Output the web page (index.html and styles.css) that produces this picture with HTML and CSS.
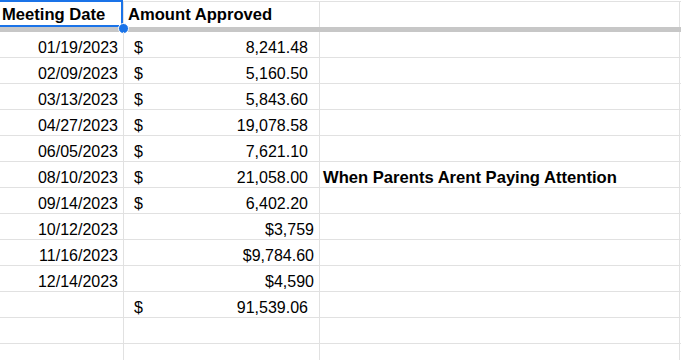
FILE: index.html
```html
<!DOCTYPE html>
<html>
<head>
<meta charset="utf-8">
<link rel="stylesheet" href="styles.css">
</head>
<body>
<div class="sheet">
  <div class="row head">
    <div class="cell a b">Meeting Date</div>
    <div class="cell b">Amount Approved</div>
    <div class="cell"></div>
    <div class="cell d"></div>
    <div class="sel"></div>
    <div class="dot"></div>
  </div>
  <div class="freeze"></div>

  <div class="row"><div class="cell r">01/19/2023</div><div class="cell acc"><span>$</span><span>8,241.48</span></div><div class="cell"></div><div class="cell d"></div></div>
  <div class="row"><div class="cell r">02/09/2023</div><div class="cell acc"><span>$</span><span>5,160.50</span></div><div class="cell"></div><div class="cell d"></div></div>
  <div class="row"><div class="cell r">03/13/2023</div><div class="cell acc"><span>$</span><span>5,843.60</span></div><div class="cell"></div><div class="cell d"></div></div>
  <div class="row"><div class="cell r">04/27/2023</div><div class="cell acc"><span>$</span><span>19,078.58</span></div><div class="cell"></div><div class="cell d"></div></div>
  <div class="row"><div class="cell r">06/05/2023</div><div class="cell acc"><span>$</span><span>7,621.10</span></div><div class="cell"></div><div class="cell d"></div></div>
  <div class="row"><div class="cell r">08/10/2023</div><div class="cell acc"><span>$</span><span>21,058.00</span></div><div class="cell b">When Parents Arent Paying Attention</div><div class="cell d"></div></div>
  <div class="row"><div class="cell r">09/14/2023</div><div class="cell acc"><span>$</span><span>6,402.20</span></div><div class="cell"></div><div class="cell d"></div></div>
  <div class="row"><div class="cell r">10/12/2023</div><div class="cell r">$3,759</div><div class="cell"></div><div class="cell d"></div></div>
  <div class="row"><div class="cell r">11/16/2023</div><div class="cell r">$9,784.60</div><div class="cell"></div><div class="cell d"></div></div>
  <div class="row"><div class="cell r">12/14/2023</div><div class="cell r">$4,590</div><div class="cell"></div><div class="cell d"></div></div>
  <div class="row"><div class="cell"></div><div class="cell acc"><span>$</span><span>91,539.06</span></div><div class="cell"></div><div class="cell d"></div></div>
  <div class="row"><div class="cell"></div><div class="cell"></div><div class="cell"></div><div class="cell d"></div></div>
  <div class="row"><div class="cell"></div><div class="cell"></div><div class="cell"></div><div class="cell d"></div></div>
</div>
</body>
</html>
```

FILE: styles.css
```css
html, body {
  margin: 0;
  padding: 0;
  background: #ffffff;
  overflow: hidden;
}

.sheet {
  font-family: "Liberation Sans", Arial, sans-serif;
  font-size: 16px;
  color: #000000;
  padding-top: 1px;
}

.row {
  display: grid;
  grid-template-columns: 124px 196px 360px 1fr;
  height: 26px;
  position: relative;
}

.cell {
  box-sizing: border-box;
  border-right: 1px solid #e1e1e1;
  border-bottom: 1px solid #e1e1e1;
  padding: 6px 3px 0 3px;
  line-height: 19px;
  white-space: nowrap;
  overflow: visible;
}

.cell.d {
  border-right: none;
}

.head {
  height: 26px;
}

.head .cell {
  border-top: 1px solid #e1e1e1;
  border-bottom: none;
  padding-top: 3px;
}

.b {
  font-weight: bold;
  font-size: 16.6px;
}

.cell.a {
  padding-left: 2px;
}

.head .cell.b:nth-child(2) {
  padding-left: 4px;
}

.r {
  text-align: right;
  padding-right: 5px;
}

.acc {
  display: flex;
  justify-content: space-between;
  padding-left: 10px;
  padding-right: 11px;
}

.freeze {
  height: 5px;
  background: #c7c7c7;
}

.sel {
  position: absolute;
  left: -2px;
  top: -1px;
  width: 125px;
  height: 27px;
  box-sizing: border-box;
  border: 2px solid #1a73e8;
  pointer-events: none;
}

.dot {
  position: absolute;
  left: 118px;
  top: 22px;
  width: 9px;
  height: 9px;
  border-radius: 50%;
  background: #1a73e8;
  border: 1px solid #ffffff;
}
```
